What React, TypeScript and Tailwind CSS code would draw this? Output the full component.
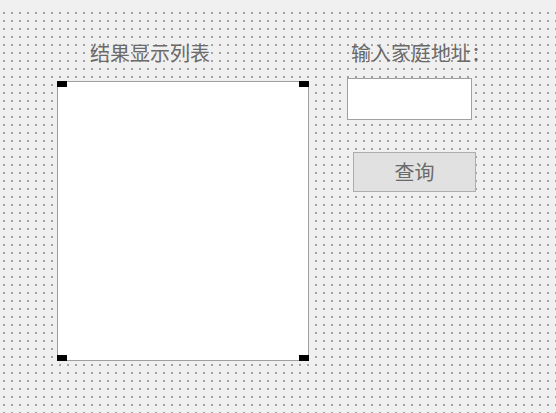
const dotted =
  'bg-[image:linear-gradient(to_bottom,transparent_2px,#f0f0f0_2px),linear-gradient(to_right,#a3a3a3_2px,#f0f0f0_2px)] bg-[size:8px_8px] bg-[position:3px_2px]'

function Handle({ className }: { className: string }) {
  return <div className={`absolute w-[10px] h-[6px] bg-black ${className}`} />
}

export default function App() {
  const font = { fontFamily: '"Noto Sans CJK SC", "Noto Sans", sans-serif' }

  return (
    <div className="w-[556px] h-[413px] bg-[#f0f0f0] overflow-hidden" style={font}>
      <div className={`mt-[10px] h-[403px] flex pl-[57px] pt-[33px] gap-[38px] ${dotted}`}>
        {/* left: list box */}
        <div className="flex flex-col">
          <p className="ml-[33px] text-[20px] leading-[20px] font-normal text-[#6a6a6a]">
            结果显示列表
          </p>
          <div className="relative mt-[18px] w-[252px] h-[280px] bg-white border border-[#a0a0a0]">
            <Handle className="-top-px -left-px" />
            <Handle className="-top-px -right-px" />
            <Handle className="-bottom-px -left-px" />
            <Handle className="-bottom-px -right-px" />
          </div>
        </div>

        {/* right: address input + query button */}
        <div className="flex flex-col">
          <p className="ml-[4px] text-[20px] leading-[20px] font-normal text-[#6a6a6a]">
            输入家庭地址：
          </p>
          <input
            type="text"
            className="mt-[15px] w-[125px] h-[42px] bg-white border border-[#a0a0a0] outline-none"
          />
          <button className="mt-[32px] ml-[6px] w-[123px] h-[40px] bg-[#e1e1e1] border border-[#adadad] text-[20px] leading-[20px] font-normal text-[#6a6a6a]">
            查询
          </button>
        </div>
      </div>
    </div>
  )
}
